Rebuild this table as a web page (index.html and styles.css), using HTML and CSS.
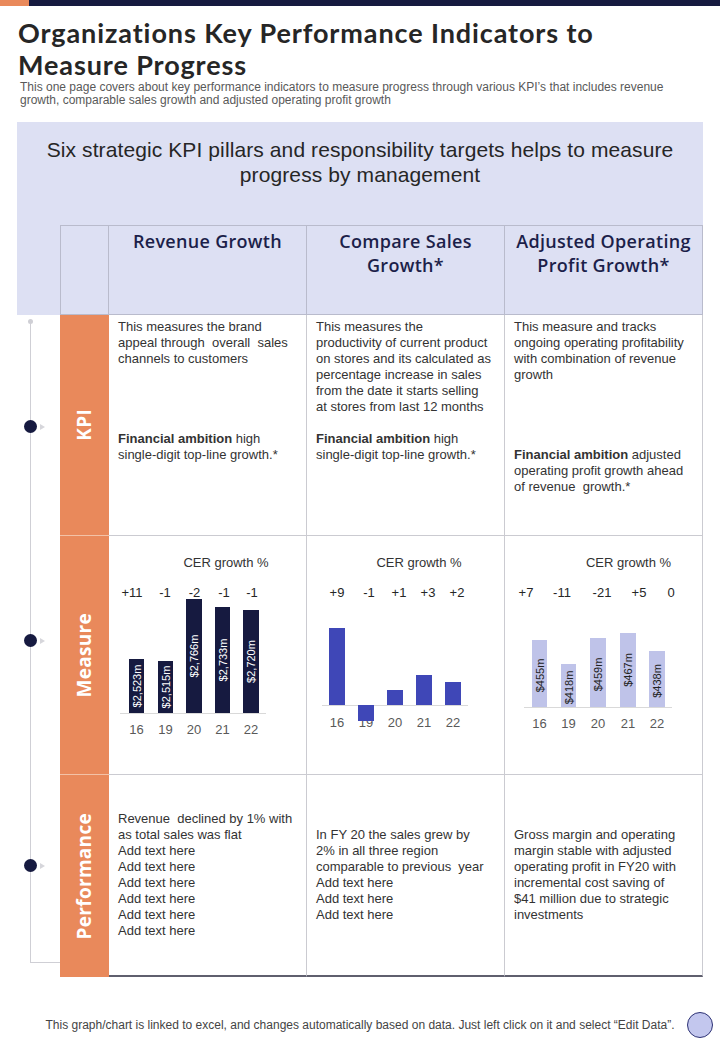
FILE: index.html
```html
<!DOCTYPE html>
<html lang="en">
<head>
<meta charset="utf-8">
<title>Organizations Key Performance Indicators</title>
<link rel="stylesheet" href="styles.css">
</head>
<body>
<div class="topbar"><span class="topbar-accent"></span></div>

<header class="intro">
  <h1 class="title">Organizations Key Performance Indicators to<br>Measure Progress</h1>
  <p class="subtitle">This one page covers about key performance indicators to measure progress through various KPI’s that includes revenue<br>growth, comparable sales growth and adjusted operating profit growth</p>
</header>

<main class="board">
  <p class="lead">Six strategic KPI pillars and responsibility targets helps to measure<br>progress by management</p>

  <div class="head-spacer"></div>
  <div class="head-cell head-label"></div>
  <div class="head-cell">Revenue Growth</div>
  <div class="head-cell">Compare Sales<br>Growth*</div>
  <div class="head-cell">Adjusted Operating<br>Profit Growth*</div>

  <!-- KPI row -->
  <div class="track track-first">
    <span class="track-cap"></span>
    <span class="node node-kpi"><span class="node-dot"></span><span class="node-arrow"></span></span>
  </div>
  <div class="row-label"><span class="row-label-text">KPI</span></div>
  <div class="cell cell-kpi">
    <p class="desc">This measures the brand<br>appeal through &nbsp;overall &nbsp;sales<br>channels to customers</p>
    <p class="ambition"><b>Financial ambition</b> high<br>single-digit top-line growth.*</p>
  </div>
  <div class="cell cell-kpi">
    <p class="desc">This measures the<br>productivity of current product<br>on stores and its calculated as<br>percentage increase in sales<br>from the date it starts selling<br>at stores from last 12 months</p>
    <p class="ambition"><b>Financial ambition</b> high<br>single-digit top-line growth.*</p>
  </div>
  <div class="cell cell-kpi">
    <p class="desc desc-tall">This measure and tracks<br>ongoing operating profitability<br>with combination of revenue<br>growth</p>
    <p class="ambition"><b>Financial ambition</b> adjusted<br>operating profit growth ahead<br>of revenue &nbsp;growth.*</p>
  </div>

  <!-- Measure row -->
  <div class="track">
    <span class="node node-measure"><span class="node-dot"></span><span class="node-arrow"></span></span>
  </div>
  <div class="row-label"><span class="row-label-text">Measure</span></div>
  <div class="cell cell-chart">
    <svg class="chart" width="197" height="238" viewBox="0 0 197 238">
      <text class="chart-title" x="117" y="31">CER growth %</text>
      <text class="chart-growth" x="23" y="61">+11</text>
      <text class="chart-growth" x="56" y="61">-1</text>
      <text class="chart-growth" x="85.5" y="61">-2</text>
      <text class="chart-growth" x="115" y="61">-1</text>
      <text class="chart-growth" x="143" y="61">-1</text>
      <line class="chart-axis" x1="11" y1="177.5" x2="157" y2="177.5"></line>
      <rect class="bar-navy" x="20" y="123" width="15" height="54"></rect>
      <rect class="bar-navy" x="49" y="125" width="15" height="52"></rect>
      <rect class="bar-navy" x="77" y="63" width="16" height="114"></rect>
      <rect class="bar-navy" x="106" y="71" width="15" height="106"></rect>
      <rect class="bar-navy" x="134" y="74" width="16" height="103"></rect>
      <text class="bar-label bar-label-light" transform="translate(27.5 150) rotate(-90)">$2,523m</text>
      <text class="bar-label bar-label-light" transform="translate(56.5 151) rotate(-90)">$2,515m</text>
      <text class="bar-label bar-label-light" transform="translate(85 120) rotate(-90)">$2,766m</text>
      <text class="bar-label bar-label-light" transform="translate(113.5 124) rotate(-90)">$2,733m</text>
      <text class="bar-label bar-label-light" transform="translate(142 125.5) rotate(-90)">$2,720m</text>
      <text class="chart-year" x="27.5" y="197.5">16</text>
      <text class="chart-year" x="56.5" y="197.5">19</text>
      <text class="chart-year" x="85" y="197.5">20</text>
      <text class="chart-year" x="113.5" y="197.5">21</text>
      <text class="chart-year" x="142" y="197.5">22</text>
    </svg>
  </div>
  <div class="cell cell-chart">
    <svg class="chart" width="197" height="238" viewBox="0 0 197 238">
      <text class="chart-title" x="112" y="31">CER growth %</text>
      <text class="chart-growth" x="30" y="61">+9</text>
      <text class="chart-growth" x="62" y="61">-1</text>
      <text class="chart-growth" x="92" y="61">+1</text>
      <text class="chart-growth" x="121" y="61">+3</text>
      <text class="chart-growth" x="150" y="61">+2</text>
      <line class="chart-axis" x1="15" y1="169.5" x2="161" y2="169.5"></line>
      <text class="chart-year" x="30" y="190.5">16</text>
      <text class="chart-year" x="59" y="190.5">19</text>
      <text class="chart-year" x="88" y="190.5">20</text>
      <text class="chart-year" x="117" y="190.5">21</text>
      <text class="chart-year" x="146" y="190.5">22</text>
      <rect class="bar-blue" x="22" y="92" width="16" height="77"></rect>
      <rect class="bar-blue" x="51" y="169" width="16" height="16"></rect>
      <rect class="bar-blue" x="80" y="154" width="16" height="15"></rect>
      <rect class="bar-blue" x="109" y="139" width="16" height="30"></rect>
      <rect class="bar-blue" x="138" y="146" width="16" height="23"></rect>
    </svg>
  </div>
  <div class="cell cell-chart">
    <svg class="chart" width="197" height="238" viewBox="0 0 197 238">
      <text class="chart-title" x="123.5" y="31">CER growth %</text>
      <text class="chart-growth" x="21" y="61">+7</text>
      <text class="chart-growth" x="57" y="61">-11</text>
      <text class="chart-growth" x="97" y="61">-21</text>
      <text class="chart-growth" x="134" y="61">+5</text>
      <text class="chart-growth" x="166" y="61">0</text>
      <line class="chart-axis" x1="19" y1="171.5" x2="167" y2="171.5"></line>
      <rect class="bar-lilac" x="27" y="104" width="15" height="67"></rect>
      <rect class="bar-lilac" x="56" y="128" width="15" height="43"></rect>
      <rect class="bar-lilac" x="85" y="102" width="16" height="69"></rect>
      <rect class="bar-lilac" x="115" y="97" width="16" height="74"></rect>
      <rect class="bar-lilac" x="144" y="115" width="16" height="56"></rect>
      <text class="bar-label" transform="translate(34.5 139.5) rotate(-90)">$455m</text>
      <text class="bar-label" transform="translate(63.5 151.5) rotate(-90)">$418m</text>
      <text class="bar-label" transform="translate(93 138.5) rotate(-90)">$459m</text>
      <text class="bar-label" transform="translate(123 134) rotate(-90)">$467m</text>
      <text class="bar-label" transform="translate(152 145) rotate(-90)">$438m</text>
      <text class="chart-year" x="34.5" y="191.5">16</text>
      <text class="chart-year" x="63.5" y="191.5">19</text>
      <text class="chart-year" x="93" y="191.5">20</text>
      <text class="chart-year" x="123" y="191.5">21</text>
      <text class="chart-year" x="152" y="191.5">22</text>
    </svg>
  </div>

  <!-- Performance row -->
  <div class="track track-last">
    <span class="node node-perf"><span class="node-dot"></span><span class="node-arrow"></span></span>
  </div>
  <div class="row-label row-label-last"><span class="row-label-text">Performance</span></div>
  <div class="cell cell-perf">
    <p class="perf-text">Revenue &nbsp;declined by 1% with<br>as total sales was flat<br>Add text here<br>Add text here<br>Add text here<br>Add text here<br>Add text here<br>Add text here</p>
  </div>
  <div class="cell cell-perf">
    <p class="perf-text">In FY 20 the sales grew by<br>2% in all three region<br>comparable to previous &nbsp;year<br>Add text here<br>Add text here<br>Add text here</p>
  </div>
  <div class="cell cell-perf">
    <p class="perf-text">Gross margin and operating<br>margin stable with adjusted<br>operating profit in FY20 with<br>incremental cost saving of<br>$41 million due to strategic<br>investments</p>
  </div>
</main>

<footer class="note">
  <p class="note-text">This graph/chart is linked to excel, and changes automatically based on data. Just left click on it and select “Edit Data”.</p>
  <span class="note-circle"></span>
</footer>
</body>
</html>
```

FILE: styles.css
```css
* {
  box-sizing: border-box;
}

body {
  margin: 0;
  width: 720px;
  background: #ffffff;
  font-family: "Liberation Sans", Arial, sans-serif;
  color: #333333;
}

/* top strip */
.topbar {
  display: flex;
  height: 6px;
  background: #161a40;
}

.topbar-accent {
  width: 29px;
  background: #e9895b;
}

/* heading */
.intro {
  padding: 11px 0 0 18px;
}

.title {
  margin: 0;
  font-family: Lato, "Open Sans", sans-serif;
  font-weight: 700;
  font-size: 27px;
  line-height: 32px;
  letter-spacing: 0.9px;
  color: #262626;
}

.subtitle {
  margin: 0 0 0 2px;
  font-size: 12px;
  line-height: 13px;
  letter-spacing: 0;
  color: #595959;
}

/* board grid */
.board {
  margin: 15px 0 0 17px;
  width: 686px;
  display: grid;
  grid-template-columns: 43px 49px 198px 198px 198px;
  grid-template-rows: 103px 90px 221px 239px 202px;
}

.lead {
  grid-column: 1 / -1;
  margin: 0;
  padding-top: 15px;
  background: #dde0f3;
  text-align: center;
  font-size: 21px;
  line-height: 25px;
  letter-spacing: 0.1px;
  color: #262626;
}

.head-spacer {
  background: #dde0f3;
}

.head-cell {
  background: #dde0f3;
  border-top: 1px solid #b9bbcc;
  border-right: 1px solid #b9bbcc;
  border-bottom: 1px solid #b9bbcc;
  padding-top: 3px;
  text-align: center;
  font-family: "Open Sans", sans-serif;
  font-weight: 600;
  font-size: 18px;
  line-height: 24px;
  letter-spacing: 0.3px;
  color: #1c1f4a;
}

.head-label {
  border-left: 1px solid #b9bbcc;
}

/* timeline */
.track {
  margin-left: 13px;
  border-left: 1px solid #cfcfd5;
  display: flex;
  flex-direction: column;
  align-items: flex-start;
}

.track-first {
  margin-top: 6px;
}

.track-last {
  margin-bottom: 14px;
  border-bottom: 1px solid #cfcfd5;
}

.track-cap {
  width: 5px;
  height: 5px;
  margin: -2px 0 0 -3px;
  border-radius: 50%;
  background: #cfcfd5;
}

.node {
  display: flex;
  align-items: center;
  gap: 3px;
  margin-left: -7px;
}

.node-kpi {
  margin-top: 96px;
}

.node-measure {
  margin-top: 98px;
}

.node-perf {
  margin-top: 84px;
}

.node-dot {
  width: 13px;
  height: 13px;
  border-radius: 50%;
  background: #161a40;
}

.node-arrow {
  width: 0;
  height: 0;
  border-top: 3px solid transparent;
  border-bottom: 3px solid transparent;
  border-left: 5px solid #d6d6db;
}

/* row labels */
.row-label {
  background: #e9895b;
  border-bottom: 1px solid #f3c2a7;
  display: flex;
  align-items: center;
  justify-content: center;
}

.row-label-last {
  border-bottom: none;
}

.row-label-text {
  writing-mode: vertical-rl;
  transform: rotate(180deg);
  color: #ffffff;
  font-family: "Open Sans", sans-serif;
  font-weight: 700;
  font-size: 19px;
  line-height: 1;
  letter-spacing: 0.3px;
}

/* cells */
.cell {
  border-right: 1px solid #cbcbd1;
  border-bottom: 1px solid #cbcbd1;
  font-size: 13px;
  line-height: 16px;
  color: #333333;
}

.cell-kpi {
  padding: 4px 6px 0 9px;
}

.desc {
  margin: 0;
  min-height: 112px;
}

.desc-tall {
  min-height: 128px;
}

.ambition {
  margin: 0;
}

.ambition b {
  color: #333333;
}

.cell-chart .chart {
  display: block;
}

.cell-perf {
  display: flex;
  align-items: center;
  padding: 0 6px 0 9px;
  border-bottom: 2px solid #5f5f6e;
}

.perf-text {
  margin: 0;
}

/* charts */
.chart text {
  font-family: "Liberation Sans", Arial, sans-serif;
  text-anchor: middle;
}

.chart-title {
  font-size: 13px;
  fill: #333333;
}

.chart-growth {
  font-size: 13px;
  fill: #262626;
}

.chart-year {
  font-size: 13px;
  fill: #595959;
}

.chart-axis {
  stroke: #d9d9d9;
  stroke-width: 1;
}

.bar-navy {
  fill: #161a40;
}

.bar-blue {
  fill: #3f47b7;
}

.bar-lilac {
  fill: #bfc3e9;
}

.bar-label {
  font-size: 11px;
  fill: #222222;
  dominant-baseline: central;
}

.bar-label-light {
  fill: #ffffff;
}

/* footer */
.note {
  display: flex;
  align-items: center;
  margin-top: 35px;
  padding-left: 45px;
}

.note-text {
  width: 630px;
  margin: 0;
  text-align: center;
  font-size: 12px;
  line-height: 14px;
  letter-spacing: 0;
  color: #444444;
}

.note-circle {
  margin-left: 12px;
  width: 26px;
  height: 26px;
  border-radius: 50%;
  background: #c3c7ee;
  border: 1px solid #2d3275;
}
```
